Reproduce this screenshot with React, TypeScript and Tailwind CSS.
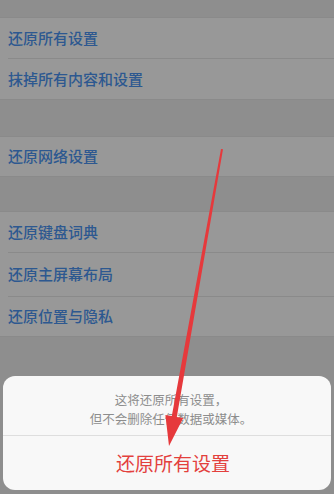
import React from 'react';

const font = { fontFamily: '"Noto Sans CJK SC", "Noto Sans", sans-serif' };

const Row = ({ label, last, h }: { label: string; last?: boolean; h: string }) => (
  <div className={`${h} flex items-center pl-2`}>
    <div className={`flex h-full flex-1 items-center ${last ? '' : 'border-b border-[#8a8a8a]'}`}>
      <span className="text-[15px] font-medium text-[#2d5890]">{label}</span>
    </div>
  </div>
);

const Section = ({ children }: { children: React.ReactNode }) => (
  <div className="border-y border-[#8a8a8a] bg-[#989898]">{children}</div>
);

export default function App() {
  return (
    <div className="relative h-[494px] w-[334px] overflow-hidden bg-[#8e8e8e]" style={font}>
      <div className="h-[17px]" />
      <Section>
        <Row label="还原所有设置" h="h-[41px]" />
        <Row label="抹掉所有内容和设置" h="h-[40px]" last />
      </Section>
      <div className="h-[36px]" />
      <Section>
        <Row label="还原网络设置" h="h-[39px]" last />
      </Section>
      <div className="h-[34px]" />
      <Section>
        <Row label="还原键盘词典" h="h-[41px]" />
        <Row label="还原主屏幕布局" h="h-[44px]" />
        <Row label="还原位置与隐私" h="h-[39px]" last />
      </Section>
      <div className="h-[39px]" />

      {/* action sheet */}
      <div className="mx-[3px] flex h-[114px] flex-col rounded-[12px] bg-[#f8f8f8]">
        <div className="flex h-[59px] flex-col items-center justify-center pl-2 pt-1.5 text-[12.5px] leading-[19px] text-[#8d8d8d]">
          <span>这将还原所有设置，</span>
          <span>但不会删除任何数据或媒体。</span>
        </div>
        <div className="h-px bg-[#dedede]" />
        <div className="flex flex-1 items-center justify-center pl-3">
          <span className="text-[19px] text-[#e3403d]">还原所有设置</span>
        </div>
      </div>

      {/* red arrow annotation */}
      <svg className="pointer-events-none absolute left-0 top-0" width="334" height="494" viewBox="0 0 334 494">
        <polygon
          points="221,149 223,149.3 176.8,416.9 183.2,418.1 169,446 165.4,414.9 171.8,416.1"
          fill="#e6393c"
        />
      </svg>
    </div>
  );
}
